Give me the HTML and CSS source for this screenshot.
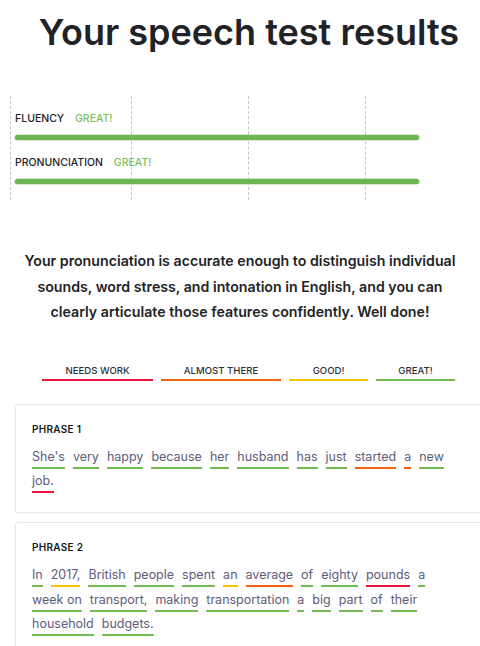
FILE: index.html
```html
<!DOCTYPE html>
<html lang="en">
<head>
<meta charset="utf-8">
<title>Your speech test results</title>
<link rel="stylesheet" href="styles.css">
</head>
<body>
<main class="page">
  <h1 class="title">Your speech test results</h1>

  <section class="chart">
    <div class="grid"><span></span><span></span><span></span></div>
    <div class="metric">
      <div class="metric-label">FLUENCY <span class="metric-score">GREAT!</span></div>
      <div class="bar"></div>
    </div>
    <div class="metric">
      <div class="metric-label">PRONUNCIATION <span class="metric-score">GREAT!</span></div>
      <div class="bar"></div>
    </div>
  </section>

  <p class="summary">Your pronunciation is accurate enough to distinguish individual sounds, word stress, and intonation in English, and you can clearly articulate those features confidently. Well done!</p>

  <ul class="legend">
    <li class="legend-item needs">NEEDS WORK</li>
    <li class="legend-item almost">ALMOST THERE</li>
    <li class="legend-item good">GOOD!</li>
    <li class="legend-item great">GREAT!</li>
  </ul>

  <article class="card">
    <h2 class="phrase-title">PHRASE 1</h2>
    <div class="words">
      <span class="w g">She's</span>
      <span class="w g">very</span>
      <span class="w g">happy</span>
      <span class="w g">because</span>
      <span class="w g">her</span>
      <span class="w g">husband</span>
      <span class="w g">has</span>
      <span class="w g">just</span>
      <span class="w o">started</span>
      <span class="w o">a</span>
      <span class="w g">new</span>
      <span class="w r">job.</span>
    </div>
  </article>

  <article class="card">
    <h2 class="phrase-title">PHRASE 2</h2>
    <div class="words">
      <span class="w g">In</span>
      <span class="w y">2017,</span>
      <span class="w g">British</span>
      <span class="w g">people</span>
      <span class="w g">spent</span>
      <span class="w y">an</span>
      <span class="w o">average</span>
      <span class="w g">of</span>
      <span class="w g">eighty</span>
      <span class="w r">pounds</span>
      <span class="w g">a</span>
      <span class="w g">week on</span>
      <span class="w g">transport,</span>
      <span class="w g">making</span>
      <span class="w g">transportation</span>
      <span class="w g">a</span>
      <span class="w g">big</span>
      <span class="w g">part</span>
      <span class="w g">of</span>
      <span class="w g">their</span>
      <span class="w g">household</span>
      <span class="w g">budgets.</span>
    </div>
  </article>
</main>
</body>
</html>
```

FILE: styles.css
```css
html {
  overflow: hidden;
}
body {
  margin: 0;
  background: #ffffff;
  font-family: Inter, "Open Sans", Arial, sans-serif;
  color: #222326;
}
.page {
  width: 480px;
}
.title {
  margin: 10px 0 0;
  padding-left: 18px;
  font-size: 36px;
  line-height: 44px;
  font-weight: 600;
  text-align: center;
  color: #1f2226;
}
.chart {
  position: relative;
  margin: 42px 0 0 10px;
  height: 104px;
  box-sizing: border-box;
  padding: 15px 0 0 4px;
  border-left: 1px dashed #c4c4c4;
}
.grid {
  position: absolute;
  top: 0;
  bottom: 0;
  left: 4px;
  display: grid;
  grid-template-columns: repeat(3, 117px);
}
.grid span {
  border-right: 1px dashed #c4c4c4;
}
.metric {
  position: relative;
  margin-bottom: 15px;
}
.metric-label {
  font-size: 10.5px;
  line-height: 16px;
  font-weight: 500;
  color: #222327;
}
.metric-score {
  margin-left: 8px;
  color: #7cbf5f;
}
.bar {
  margin-top: 8px;
  width: 404px;
  height: 5px;
  border-radius: 3px;
  background: #6db553;
  box-shadow: 0 0 0 0.5px #a8d696;
}
.summary {
  margin: 48px 0 0;
  padding: 0 18px;
  font-size: 14.2px;
  line-height: 25.5px;
  font-weight: 600;
  text-align: center;
  color: #222326;
}
.legend {
  list-style: none;
  margin: 40px 0 0;
  padding: 0 25px 0 0;
  display: flex;
  justify-content: flex-end;
  gap: 8px;
}
.legend-item {
  font-size: 9.6px;
  line-height: 12px;
  font-weight: 500;
  color: #2e2f33;
  text-align: center;
  padding-bottom: 2px;
  border-bottom: 2px solid;
}
.legend-item.needs { width: 111px; border-color: #e6173e; }
.legend-item.almost { width: 120px; border-color: #f5620f; }
.legend-item.good { width: 79px; border-color: #f6c500; }
.legend-item.great { width: 79px; border-color: #72bb53; }
.card {
  margin: 23px 0 0 15px;
  width: 480px;
  box-sizing: border-box;
  padding: 17px 16px 19px;
  border: 1px solid #e8e8ea;
  border-radius: 3px;
  box-shadow: 0 1px 2px rgba(0, 0, 0, 0.04);
}
.card + .card {
  margin-top: 9px;
}
.phrase-title {
  margin: 0;
  font-size: 10px;
  line-height: 14px;
  font-weight: 600;
  color: #16171a;
  letter-spacing: 0.3px;
}
.words {
  margin-top: 11px;
  width: 424px;
  display: flex;
  flex-wrap: wrap;
  column-gap: 8px;
  row-gap: 2.5px;
}
.w {
  font-size: 12.5px;
  line-height: 19px;
  color: #5e5c7b;
  padding-bottom: 1px;
  border-bottom: 2px solid;
  white-space: nowrap;
}
.w.g { border-color: #72bb53; }
.w.o { border-color: #f5620f; }
.w.r { border-color: #e6173e; }
.w.y { border-color: #f6c500; }
```
